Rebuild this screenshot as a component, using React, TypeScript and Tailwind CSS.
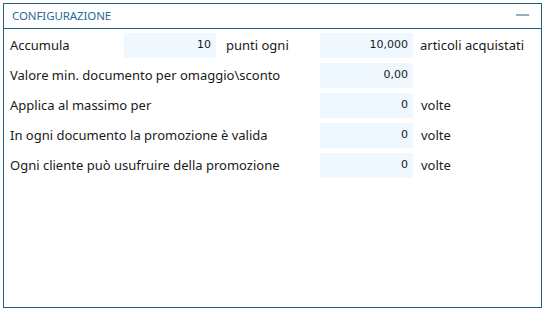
export default function App() {
  const label = "flex items-center text-[13px] text-[#1a1a1a]";
  const field =
    "flex items-center justify-end bg-[#f0f8ff] pr-[5px] text-[11px] text-[#1a1a1a] [font-family:'DejaVu_Sans',sans-serif]";

  return (
    <div className="w-[545px] h-[310px] bg-white p-[3px] [font-family:'Noto_Sans',sans-serif]">
      <div className="w-[539px] h-[305px] border border-[#22607a] flex flex-col">
        <div className="h-[25px] border-b border-[#22607a] flex items-center justify-between pl-[8px] pr-[12px]">
          <span className="text-[11.5px] text-[#2a6b96] tracking-[-0.1px]">CONFIGURAZIONE</span>
          <span className="block w-[13px] h-[2px] bg-[#8fb0c2] mb-[2px]" />
        </div>
        <div className="grid grid-cols-[114px_92px_104px_93px_1fr] auto-rows-[25px] gap-y-[5px] pt-[4px] pl-[6px]">
          <div className={label}>Accumula</div>
          <div className={field}>10</div>
          <div className={`${label} pl-[10px]`}>punti ogni</div>
          <div className={field}>10,000</div>
          <div className={`${label} pl-[7px]`}>articoli acquistati</div>

          <div className={`${label} col-span-3`}>Valore min. documento per omaggio\sconto</div>
          <div className={field}>0,00</div>
          <div />

          <div className={`${label} col-span-3`}>Applica al massimo per</div>
          <div className={field}>0</div>
          <div className={`${label} pl-[8px]`}>volte</div>

          <div className={`${label} col-span-3`}>In ogni documento la promozione è valida</div>
          <div className={field}>0</div>
          <div className={`${label} pl-[8px]`}>volte</div>

          <div className={`${label} col-span-3`}>Ogni cliente può usufruire della promozione</div>
          <div className={field}>0</div>
          <div className={`${label} pl-[8px]`}>volte</div>
        </div>
      </div>
    </div>
  );
}
